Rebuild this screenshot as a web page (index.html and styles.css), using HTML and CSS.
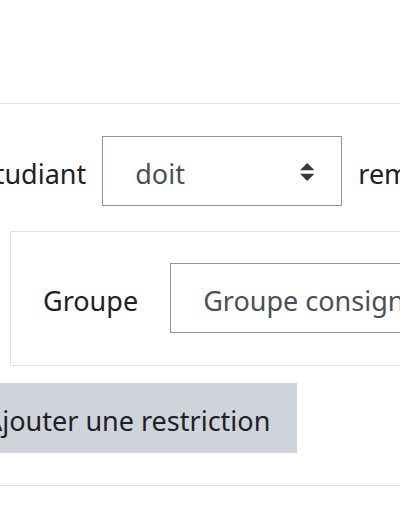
FILE: index.html
```html
<!DOCTYPE html>
<html lang="fr">
<head>
<meta charset="utf-8">
<title>Restriction d'accès</title>
<link rel="stylesheet" href="styles.css">
</head>
<body>
<div class="page">
  <hr class="rule">
  <div class="content">
    <div class="head-row">
      <span class="label">L'étudiant</span>
      <div class="select select-narrow">
        <span class="value">doit</span>
        <svg class="caret" viewBox="0 0 4 5" aria-hidden="true"><path d="M2 0L0 2h4zm0 5L0 3h4z"/></svg>
      </div>
      <span class="label">remplir la condition suivante</span>
    </div>
    <div class="condition">
      <span class="label">Groupe</span>
      <div class="select select-wide">
        <span class="value">Groupe consigne</span>
      </div>
    </div>
    <button class="btn" type="button"><span class="btn-text">Ajouter une restriction</span></button>
  </div>
  <hr class="rule">
</div>
</body>
</html>
```

FILE: styles.css
```css
html, body {
  margin: 0;
  background: #ffffff;
}

body {
  font-family: "Noto Sans", "Liberation Sans", sans-serif;
  font-size: 27px;
  line-height: 1.5;
  color: #1d2125;
  overflow: hidden;
}

.page {
  padding-top: 103px;
}

.rule {
  border: 0;
  border-top: 1px solid #dee2e6;
  margin: 0;
  height: 0;
}

.content {
  margin-left: -42px;
  padding: 32px 0 32px;
}

.head-row {
  display: flex;
  align-items: center;
  gap: 16px;
  margin-left: 5px;
  white-space: nowrap;
}

.label,
.value,
.btn-text {
  flex: none;
  white-space: nowrap;
  padding-top: 6px;
}

.select {
  box-sizing: border-box;
  height: 70px;
  border: 1px solid #8f959e;
  display: flex;
  align-items: center;
  padding: 0 27px 0 32px;
  color: #495057;
  flex: none;
  white-space: nowrap;
  background: #ffffff;
}

.select-narrow {
  width: 240px;
  justify-content: space-between;
}

.select-wide {
  width: 320px;
}

.caret {
  width: 14.4px;
  height: 18px;
  fill: #343a40;
  margin-top: 2px;
}

.condition {
  margin: 25px 0 0 52px;
  border: 1px solid #e1e3e6;
  padding: 31px 32px 32px;
  display: flex;
  align-items: center;
  gap: 32px;
  width: max-content;
}

.btn {
  display: flex;
  align-items: center;
  margin-top: 17px;
  height: 70px;
  padding: 0 27px;
  border: 0;
  background: #ced4da;
  font: inherit;
  color: #1d2125;
  white-space: nowrap;
}
```
